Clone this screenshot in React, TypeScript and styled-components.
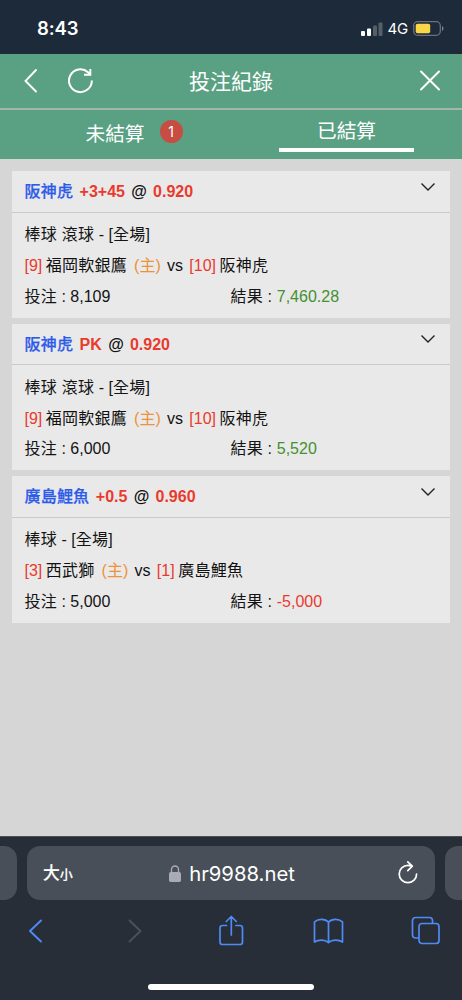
import React from "react";
import styled, { createGlobalStyle } from "styled-components";

const GlobalStyle = createGlobalStyle`
  * { box-sizing: border-box; }
  body {
    margin: 0;
    background: #d6d6d6;
    font-family: "Liberation Sans", "Noto Sans CJK TC", sans-serif;
  }
`;

const Screen = styled.div`
  width: 462px;
  height: 1000px;
  display: flex;
  flex-direction: column;
  background: #d6d6d6;
  overflow: hidden;
`;

const StatusBar = styled.header`
  height: 54px;
  flex: none;
  display: flex;
  align-items: center;
  justify-content: space-between;
  padding: 3px 18px 0 37px;
  background: #1d2a39;
  color: #fff;
`;

const Clock = styled.time`
  margin-top: -1px;
  font: 600 18.5px/24px Inter, sans-serif;
  letter-spacing: -0.1px;
`;

const StatusIcons = styled.div`
  display: flex;
  align-items: center;
`;

const Network = styled.span`
  margin: 0 5px 0 5px;
  font: 400 15px/20px Inter, sans-serif;
  letter-spacing: -0.2px;
`;

const NavBar = styled.nav`
  height: 56px;
  flex: none;
  display: grid;
  grid-template-columns: 100px 1fr 100px;
  align-items: center;
  background: #5aa183;
  border-bottom: 2px solid #a2b6ac;
  color: #fff;
`;

const NavGroup = styled.div<{ $end?: boolean }>`
  display: flex;
  align-items: center;
  gap: 30px;
  justify-content: ${(p) => (p.$end ? "flex-end" : "flex-start")};
  padding: ${(p) => (p.$end ? "0 21px 0 0" : "0 0 0 24px")};
`;

const Title = styled.h1`
  margin: 2px 0 0;
  text-align: center;
  font-size: 21px;
  font-weight: 400;
  line-height: 30px;
`;

const Tabs = styled.div`
  height: 49px;
  flex: none;
  display: grid;
  grid-template-columns: 231px 231px;
  background: #5aa183;
  color: #fff;
  font-size: 19.7px;
  line-height: 30px;
`;

const Tab = styled.div<{ $active?: boolean }>`
  display: flex;
  justify-content: ${(p) => (p.$active ? "center" : "flex-start")};
  align-items: flex-start;
  padding: ${(p) => (p.$active ? "6px 0 0" : "9px 0 0 85.5px")};
`;

const ActiveLabel = styled.span`
  width: 135px;
  height: 36px;
  text-align: center;
  border-bottom: 4px solid #fff;
`;

const Count = styled.span`
  width: 23px;
  height: 23px;
  margin: 1px 0 0 15px;
  border-radius: 50%;
  background: #c74d42;
  text-align: center;
  font: 400 14px/23px Inter, sans-serif;
`;

const BetList = styled.main`
  flex: 1;
  display: flex;
  flex-direction: column;
  gap: 5.8px;
  padding: 12px 12.5px 0 12px;
`;

const Card = styled.article`
  height: 146.8px;
  flex: none;
  background: #e9e9e9;
  color: #141414;
  font-size: 16px;
`;

const CardHeader = styled.div`
  height: 41.6px;
  display: flex;
  justify-content: space-between;
  padding: 0 14px 0 12.5px;
  border-bottom: 1px solid #c9c9c9;
  font-weight: 700;
  line-height: 41px;
`;

const Chevron = styled.svg`
  margin-top: 10.8px;
`;

const CardBody = styled.div`
  padding: 7.6px 12.5px 0;
  line-height: 30.8px;
`;

const Line = styled.div`
  height: 30.8px;
  white-space: pre;
`;

const AmountLine = styled(Line)`
  display: grid;
  grid-template-columns: 206px 1fr;
`;

const tones = {
  blue: "#2d5be9",
  red: "#ea3a2d",
  orange: "#ec923a",
  green: "#45902f",
  black: "#111",
};

const Ink = styled.span<{ $tone: keyof typeof tones; $gap?: number }>`
  color: ${(p) => tones[p.$tone]};
  margin-left: ${(p) => p.$gap ?? 0}px;
`;

const Team = styled(Ink)`
  font-weight: 500;
  letter-spacing: 0.2px;
  -webkit-text-stroke: 0.25px currentColor;
`;

const Cjk = styled.span`
  letter-spacing: 0.25px;
`;

const Browser = styled.footer`
  height: 164px;
  flex: none;
  display: flex;
  flex-direction: column;
  align-items: center;
  background: #272e37;
  border-top: 1px solid #4b5158;
`;

const AddressRow = styled.div`
  width: 462px;
  height: 54px;
  margin-top: 9px;
  display: grid;
  grid-template-columns: 17px 408px 17px;
  column-gap: 10px;
`;

const SideTab = styled.div<{ $right?: boolean }>`
  background: #484f58;
  border-radius: ${(p) => (p.$right ? "13px 0 0 13px" : "0 13px 13px 0")};
`;

const AddressBar = styled.div`
  display: grid;
  grid-template-columns: 60px 1fr 60px;
  align-items: center;
  padding: 0 16px;
  border-radius: 13px;
  background: #484f58;
  color: #fff;
`;

const TextSize = styled.span`
  margin-top: 3px;
  font-size: 16.8px;
  font-weight: 500;
  line-height: 24px;
  -webkit-text-stroke: 0.15px currentColor;
  small { font-size: 13px; }
`;

const Address = styled.span`
  display: flex;
  align-items: center;
  justify-content: center;
  gap: 8px;
  padding: 1px 0 0 2px;
  font: 400 20.3px/28px Inter, sans-serif;
`;

const ReloadSlot = styled.span`
  display: flex;
  justify-content: flex-end;
`;

const Toolbar = styled.div`
  width: 462px;
  height: 62px;
  display: flex;
  justify-content: space-between;
  align-items: center;
  padding: 0 21px 0 20px;
`;

const HomeBar = styled.div`
  width: 166px;
  height: 6px;
  margin-top: 22px;
  border-radius: 3px;
  background: #fff;
`;

type Bet = {
  pick: string;
  line: string;
  odds: string;
  sport: string;
  homeNo: string;
  home: string;
  awayNo: string;
  away: string;
  stake: string;
  result: string;
};

const bets: Bet[] = [
  { pick: "阪神虎", line: "+3+45", odds: "0.920", sport: "棒球 滾球", homeNo: "[9]", home: "福岡軟銀鷹", awayNo: "[10]", away: "阪神虎", stake: "8,109", result: "7,460.28" },
  { pick: "阪神虎", line: "PK", odds: "0.920", sport: "棒球 滾球", homeNo: "[9]", home: "福岡軟銀鷹", awayNo: "[10]", away: "阪神虎", stake: "6,000", result: "5,520" },
  { pick: "廣島鯉魚", line: "+0.5", odds: "0.960", sport: "棒球", homeNo: "[3]", home: "西武獅", awayNo: "[1]", away: "廣島鯉魚", stake: "5,000", result: "-5,000" },
];

const BetCard = ({ bet }: { bet: Bet }) => (
  <Card>
    <CardHeader>
      <div>
        <Team $tone="blue">{bet.pick}</Team>
        <Ink $tone="red" $gap={6.5}>{bet.line}</Ink>
        <Ink $tone="black" $gap={6.3}>@</Ink>
        <Ink $tone="red" $gap={6.2}>{bet.odds}</Ink>
      </div>
      <Chevron width="16" height="10" viewBox="0 0 16 10" fill="none" stroke="#222" strokeWidth="1.4">
        <path d="M1.500 1.500 8 8l6.500-6.500" />
      </Chevron>
    </CardHeader>
    <CardBody>
      <Line><Cjk>{bet.sport}</Cjk> - [<Cjk>全場</Cjk>]</Line>
      <Line>
        <Ink $tone="red">{bet.homeNo}</Ink>
        <Ink $tone="black" $gap={3.5}><Cjk>{bet.home}</Cjk></Ink>
        <Ink $tone="orange" $gap={7}>(主)</Ink>
        <Ink $tone="black" $gap={6.3}>vs</Ink>
        <Ink $tone="red" $gap={6.3}>{bet.awayNo}</Ink>
        <Ink $tone="black" $gap={3.6}><Cjk>{bet.away}</Cjk></Ink>
      </Line>
      <AmountLine>
        <span><Cjk>投注</Cjk> : {bet.stake}</span>
        <span><Cjk>結果</Cjk> : <Ink $tone={bet.result.startsWith("-") ? "red" : "green"} $gap={0.4}>{bet.result}</Ink></span>
      </AmountLine>
    </CardBody>
  </Card>
);

export default function App() {
  return (
    <Screen>
      <GlobalStyle />
      <StatusBar>
        <Clock>8:43</Clock>
        <StatusIcons>
          <svg width="22" height="14" viewBox="0 0 22 14" fill="#fff">
            <rect x="0" y="9" width="4" height="5" rx="1" />
            <rect x="6" y="6.500" width="4" height="7.500" rx="1" />
            <rect x="12" y="3.500" width="4" height="10.500" rx="1" opacity=".25" />
            <rect x="17.500" y="0.500" width="4" height="13.500" rx="1" opacity=".25" />
          </svg>
          <Network>4G</Network>
          <svg width="31" height="15" viewBox="0 0 31 15" fill="none">
            <rect x=".7" y=".7" width="26.600" height="13.600" rx="4" stroke="#69727c" strokeWidth="1.300" />
            <rect x="2.700" y="2.700" width="14.500" height="9.600" rx="1.800" fill="#f8d648" />
            <path d="M29 5v5c1-.4 1.500-1.300 1.500-2.500S30 5.400 29 5z" fill="#7b838c" />
          </svg>
        </StatusIcons>
      </StatusBar>
      <NavBar>
        <NavGroup>
          <svg width="14" height="26" viewBox="0 0 14 26" fill="none" stroke="#fff" strokeWidth="1.900" strokeLinecap="round">
            <path d="M12 2 1.500 13 12 23.500" />
          </svg>
          <svg width="26" height="26" viewBox="0 0 26 26" fill="none" stroke="#fff" strokeWidth="2">
            <path d="M23.800 12.500A11.400 11.400 0 1 1 20 4.200L22 6.500M22.300 1v5.700H16" />
          </svg>
        </NavGroup>
        <Title>投注紀錄</Title>
        <NavGroup $end>
          <svg width="22" height="22" viewBox="0 0 22 22" fill="none" stroke="#fff" strokeWidth="2" strokeLinecap="round">
            <path d="M2 1.500l18 18M20 1.500 2 19.500" />
          </svg>
        </NavGroup>
      </NavBar>
      <Tabs>
        <Tab>未結算<Count>1</Count></Tab>
        <Tab $active><ActiveLabel>已結算</ActiveLabel></Tab>
      </Tabs>
      <BetList>
        {bets.map((bet, i) => <BetCard key={i} bet={bet} />)}
      </BetList>
      <Browser>
        <AddressRow>
          <SideTab />
          <AddressBar>
            <TextSize>大<small>小</small></TextSize>
            <Address>
              <svg width="12" height="17" viewBox="0 0 12 17">
                <rect x="0" y="7" width="12" height="10" rx="1.800" fill="#a9abb6" />
                <path d="M2.500 8V4.500a3.500 3.500 0 0 1 7 0V8" fill="none" stroke="#a9abb6" strokeWidth="1.400" />
              </svg>
              hr9988.net
            </Address>
            <ReloadSlot>
              <svg width="22" height="24" viewBox="0 0 22 24" fill="none" stroke="#fff" strokeWidth="1.700" strokeLinecap="round" strokeLinejoin="round">
                <path d="M19.600 13a8.700 8.700 0 1 1-8.700-8.700c1.500 0 2.700.3 3.700.8M10.800 0.900l4.500 4.300-4.500 4.500" />
              </svg>
            </ReloadSlot>
          </AddressBar>
          <SideTab $right />
        </AddressRow>
        <Toolbar>
          <svg width="30" height="30" viewBox="0 0 30 30" fill="none" stroke="#4f8af5" strokeWidth="1.900" strokeLinecap="round" strokeLinejoin="round">
            <path d="M21 4.500 10 15 21 25.500" />
          </svg>
          <svg width="30" height="30" viewBox="0 0 30 30" fill="none" stroke="#4c5159" strokeWidth="1.900" strokeLinecap="round" strokeLinejoin="round">
            <path d="M12.500 4.500l11 10.500-11 10.500" />
          </svg>
          <svg width="30" height="32" viewBox="0 0 30 32" fill="none" stroke="#4f8af5" strokeWidth="1.700" strokeLinecap="round" strokeLinejoin="round">
            <path d="M11.500 10.500H7.500a2.500 2.500 0 0 0-2.500 2.500v14a2.500 2.500 0 0 0 2.500 2.500h17.500a2.500 2.500 0 0 0 2.500-2.500V13a2.500 2.500 0 0 0-2.500-2.500h-4M16.300 20V1.500M11.300 6.500l5-5 5 5" />
          </svg>
          <svg width="32" height="30" viewBox="0 0 32 30" fill="none" stroke="#4f8af5" strokeWidth="1.700" strokeLinejoin="round">
            <path d="M16.500 6.200C13 2.500 6.500 2.500 2.500 5.800V26c4-2.500 10.500-2.500 14 .5 3.500-3 10-3 14-.5V5.800c-4-3.300-10.500-3.300-14 .4zM16.500 6.200V26.500" />
          </svg>
          <svg width="30" height="30" viewBox="0 0 30 30" fill="none" stroke="#4f8af5" strokeWidth="1.700">
            <path d="M8 22H4.500a3 3 0 0 1-3-3V4.500a3 3 0 0 1 3-3h14a3 3 0 0 1 3 3v3" />
            <rect x="8" y="7.500" width="20" height="20" rx="3" />
          </svg>
        </Toolbar>
        <HomeBar />
      </Browser>
    </Screen>
  );
}
